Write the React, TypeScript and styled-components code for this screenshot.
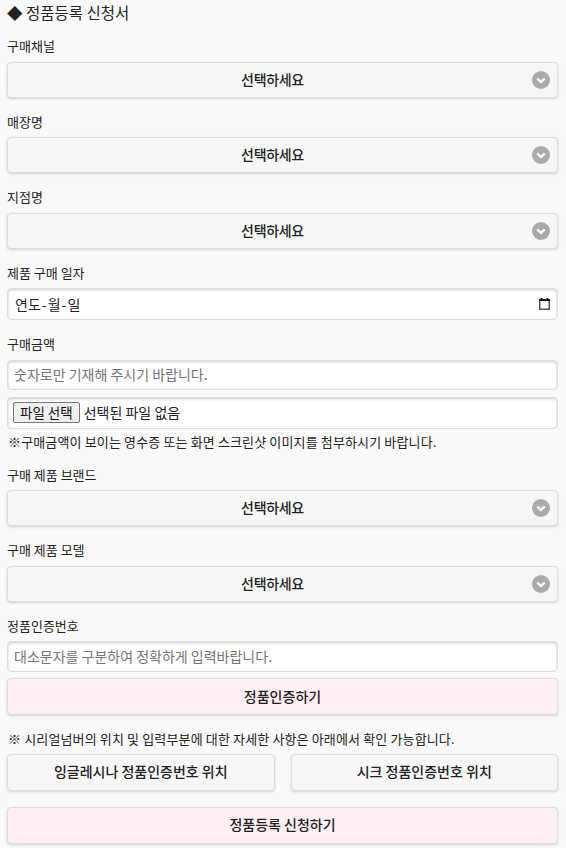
import styled, { createGlobalStyle } from "styled-components"

const GlobalStyle = createGlobalStyle`
  html, body {
    margin: 0;
    padding: 0;
    background: #f9f9f9;
    color: #333;
    font-family: "Noto Sans CJK KR", "Noto Sans", sans-serif;
  }
  * {
    box-sizing: border-box;
  }
`

const Page = styled.div`
  width: 566px;
  height: 848px;
  overflow: hidden;
  padding: 0 8px 0 7px;
`

const Title = styled.h2`
  margin: 0;
  height: 22px;
  font-size: 15.5px;
  line-height: 24px;
  font-weight: 400;
  color: #222;
`

const Field = styled.div`
  display: flex;
  flex-direction: column;
`

const Label = styled.label`
  display: block;
  height: 39.5px;
  padding-top: 14px;
  font-size: 13px;
  line-height: 20px;
  color: #222;
`

const SelectBox = styled.div`
  position: relative;
  height: 36px;
  display: flex;
  align-items: center;
  justify-content: center;
  padding: 0 20px 2px 0;
  background: #f6f6f6;
  border: 1px solid #ddd;
  border-radius: 4px;
  box-shadow: 0 1px 3px rgba(0, 0, 0, 0.15);
  font-size: 14px;
  letter-spacing: -0.3px;
  font-weight: 500;
  color: #222;
`

const Chevron = styled.span`
  position: absolute;
  right: 7px;
  top: 50%;
  transform: translateY(-50%);
  width: 18px;
  height: 18px;
  border-radius: 50%;
  background: #aaa;
  display: flex;
  align-items: center;
  justify-content: center;
`

const InputBox = styled.div<{ $height: number; $top?: number }>`
  position: relative;
  height: ${({ $height }) => $height}px;
  margin-top: ${({ $top }) => $top ?? 0}px;
  display: flex;
  align-items: center;
  padding: 0 7px 1px;
  background: #fff;
  border: 1px solid #ddd;
  border-radius: 4px;
  box-shadow: inset 0 1px 3px rgba(0, 0, 0, 0.2);
  font-size: 14px;
  color: #222;
`

const Placeholder = styled.span`
  margin-left: -1px;
  color: #757575;
`

const CalendarIcon = styled.svg`
  position: absolute;
  right: 7px;
  top: 50%;
  transform: translateY(-50%);
`

const DatePart = styled.span`
  margin: 0 1px;
`

const FileButton = styled.span`
  height: 21px;
  display: inline-flex;
  align-items: center;
  padding: 0 6px;
  margin-left: -2px;
  margin-right: 4px;
  background: #efefef;
  border: 1px solid #767676;
  border-radius: 2px;
  color: #111;
  font-size: 13.5px;
`

const Note = styled.p<{ $top: number; $height: number }>`
  margin: 0;
  padding: ${({ $top }) => $top}px 0 0 1px;
  height: ${({ $height }) => $height}px;
  font-size: 13px;
  line-height: 18px;
  letter-spacing: 0.14px;
  color: #222;
  white-space: nowrap;
`

const ActionButton = styled.div<{ $pink?: boolean; $top?: number }>`
  flex: 1;
  height: 37px;
  margin-top: ${({ $top }) => $top ?? 0}px;
  padding-bottom: 2px;
  display: flex;
  align-items: center;
  justify-content: center;
  background: ${({ $pink }) => ($pink ? "#ffeef3" : "#f6f6f6")};
  border: 1px solid #ddd;
  border-radius: 4px;
  box-shadow: 0 1px 3px rgba(0, 0, 0, 0.15);
  font-size: 14px;
  font-weight: 500;
  color: #222;
`

const ButtonRow = styled.div`
  display: flex;
  gap: 16px;
`

function SelectField({ label }: { label: string }) {
  return (
    <Field>
      <Label>{label}</Label>
      <SelectBox>
        선택하세요
        <Chevron>
          <svg width="12" height="12" viewBox="0 0 12 12" fill="none">
            <path d="M2.3 4.3 6 8l3.7-3.7" stroke="#fff" strokeWidth="2.4" />
          </svg>
        </Chevron>
      </SelectBox>
    </Field>
  )
}

export default function App() {
  return (
    <Page>
      <GlobalStyle />
      <Title>◆ 정품등록 신청서</Title>

      <SelectField label="구매채널" />
      <SelectField label="매장명" />
      <SelectField label="지점명" />

      <Field>
        <Label>제품 구매 일자</Label>
        <InputBox $height={32}>
          연도<DatePart>-</DatePart>월<DatePart>-</DatePart>일
          <CalendarIcon width="11" height="12" viewBox="0 0 11 12" fill="none">
            <rect x="0.75" y="2" width="9.5" height="9.25" stroke="#555" strokeWidth="1.5" />
            <path d="M0 2.2h11M2.5 0v2M8.5 0v2" stroke="#111" strokeWidth="1.8" />
          </CalendarIcon>
        </InputBox>
      </Field>

      <Field>
        <Label>구매금액</Label>
        <InputBox $height={30}>
          <Placeholder>숫자로만 기재해 주시기 바랍니다.</Placeholder>
        </InputBox>
      </Field>

      <InputBox $height={32} $top={7}>
        <FileButton>파일 선택</FileButton>
        선택된 파일 없음
      </InputBox>
      <Note $top={4} $height={22}>※구매금액이 보이는 영수증 또는 화면 스크린샷 이미지를 첨부하시기 바랍니다.</Note>

      <SelectField label="구매 제품 브랜드" />
      <SelectField label="구매 제품 모델" />

      <Field>
        <Label>정품인증번호</Label>
        <InputBox $height={31}>
          <Placeholder>대소문자를 구분하여 정확하게 입력바랍니다.</Placeholder>
        </InputBox>
      </Field>

      <ActionButton $pink $top={6}>정품인증하기</ActionButton>

      <Note $top={15} $height={38.5}>※ 시리얼넘버의 위치 및 입력부분에 대한 자세한 사항은 아래에서 확인 가능합니다.</Note>

      <ButtonRow>
        <ActionButton>잉글레시나 정품인증번호 위치</ActionButton>
        <ActionButton>시크 정품인증번호 위치</ActionButton>
      </ButtonRow>

      <ActionButton $pink $top={16}>정품등록 신청하기</ActionButton>
    </Page>
  )
}
